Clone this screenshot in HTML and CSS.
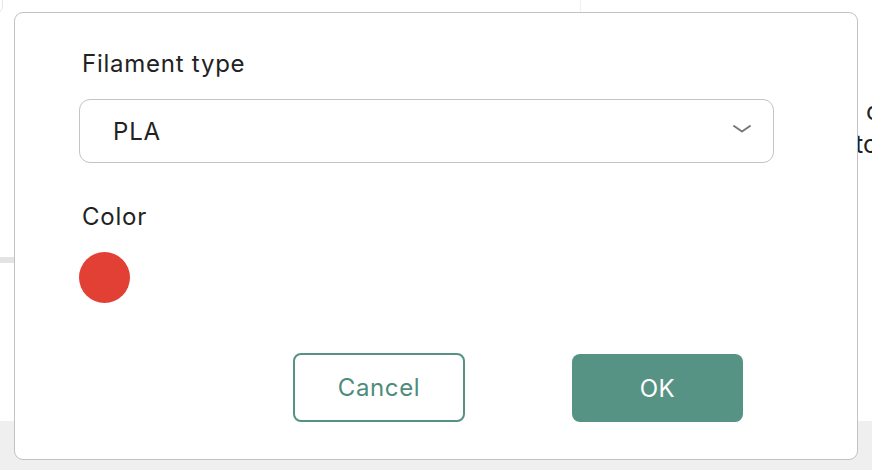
FILE: index.html
```html
<!DOCTYPE html>
<html>
<head>
<meta charset="utf-8">
<link rel="stylesheet" href="styles.css">
</head>
<body>
<div class="page">
  <div class="bg-top">
    <div class="bg-card-left"></div>
    <div class="bg-card-mid"></div>
  </div>
  <div class="bg-strip"></div>
  <div class="bg-text">
    <span class="l1">c</span>
    <span class="l2">tc</span>
  </div>
  <div class="bg-footer"></div>

  <div class="dialog">
    <div class="label">Filament type</div>
    <div class="select">
      <span class="select-value">PLA</span>
      <svg class="chevron" width="20" height="10" viewBox="0 0 20 10"><path d="M2 2 L10 7.5 L18 2" fill="none" stroke="#777" stroke-width="2" stroke-linecap="round" stroke-linejoin="round"/></svg>
    </div>
    <div class="label label-color">Color</div>
    <div class="swatch"></div>
    <div class="actions">
      <button class="btn btn-cancel">Cancel</button>
      <button class="btn btn-ok">OK</button>
    </div>
  </div>
</div>
</body>
</html>
```

FILE: styles.css
```css
html, body {
  margin: 0;
  padding: 0;
  background: #ffffff;
}
body {
  font-family: Inter, "Noto Sans", "Liberation Sans", sans-serif;
  color: #222;
}
.page {
  position: relative;
  width: 872px;
  height: 470px;
  overflow: hidden;
}
.bg-card-left {
  position: absolute;
  left: -20px;
  top: -20px;
  width: 22px;
  height: 34px;
  border-right: 1px solid #e6e6e6;
  border-bottom-right-radius: 8px;
}
.bg-card-mid {
  position: absolute;
  left: 580px;
  top: -10px;
  width: 1px;
  height: 22px;
  background: #f0f0f0;
}
.bg-strip {
  position: absolute;
  left: 0;
  top: 257px;
  width: 20px;
  height: 6px;
  background: #e3e3e3;
}
.bg-text {
  position: absolute;
  left: 855px;
  top: 95px;
  display: flex;
  flex-direction: column;
  font-size: 25px;
  line-height: 33px;
  color: #222;
}
.bg-text .l1 { padding-left: 11px; }
.bg-footer {
  position: absolute;
  left: 0;
  top: 421px;
  width: 872px;
  height: 49px;
  background: #efefef;
}
.dialog {
  position: absolute;
  left: 14px;
  top: 12px;
  width: 844px;
  height: 448px;
  background: #fff;
  border: 1px solid #c2c2c2;
  border-radius: 9px;
  padding: 0 83px 0 64px;
  box-sizing: border-box;
  display: flex;
  flex-direction: column;
}
.label {
  font-size: 24px;
  letter-spacing: 0.75px;
  line-height: 28px;
  margin-top: 37px;
  margin-left: 3px;
  color: #222;
}
.select {
  margin-top: 21px;
  height: 64px;
  border: 1px solid #c4c4c4;
  border-radius: 11px;
  box-sizing: border-box;
  display: flex;
  align-items: center;
  justify-content: space-between;
  padding: 0 21px 0 33px;
}
.select-value {
  font-size: 24px;
  letter-spacing: 0.8px;
  color: #222;
}
.chevron {
  margin-top: -4px;
}
.label-color {
  margin-top: 40px;
}
.swatch {
  margin-top: 21px;
  width: 51px;
  height: 51px;
  border-radius: 50%;
  background: #e34035;
}
.actions {
  margin-top: 50px;
  display: flex;
  justify-content: flex-end;
  gap: 107px;
  padding-right: 31px;
}
.btn {
  width: 172px;
  height: 69px;
  border-radius: 8px;
  font-family: inherit;
  font-size: 24px;
  letter-spacing: 0.6px;
  box-sizing: border-box;
  cursor: pointer;
}
.btn-cancel {
  background: #fff;
  border: 2px solid #569283;
  color: #4f8b7c;
}
.btn-ok {
  background: #569385;
  border: none;
  color: #fff;
  width: 171px;
  height: 68px;
  margin-top: 1px;
}
```
